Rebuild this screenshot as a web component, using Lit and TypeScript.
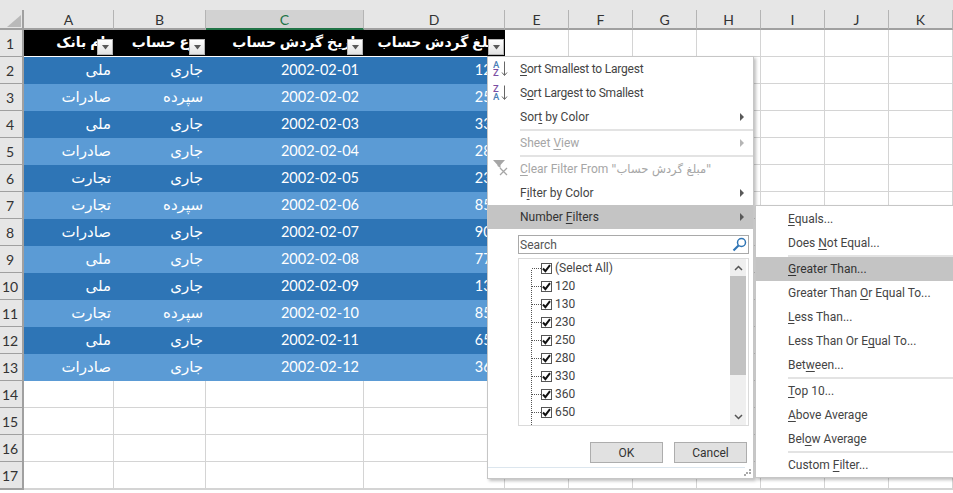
import { LitElement, html, css, svg } from "lit";
import { customElement } from "lit/decorators.js";

const cols = ["A", "B", "C", "D", "E", "F", "G", "H", "I", "J", "K"];
const rowsData = [
  ["ملی", "جاری", "2002-02-01", "120"],
  ["صادرات", "سپرده", "2002-02-02", "250"],
  ["ملی", "جاری", "2002-02-03", "330"],
  ["صادرات", "جاری", "2002-02-04", "280"],
  ["تجارت", "جاری", "2002-02-05", "230"],
  ["تجارت", "سپرده", "2002-02-06", "850"],
  ["صادرات", "جاری", "2002-02-07", "900"],
  ["ملی", "جاری", "2002-02-08", "770"],
  ["ملی", "جاری", "2002-02-09", "130"],
  ["تجارت", "سپرده", "2002-02-10", "850"],
  ["ملی", "جاری", "2002-02-11", "650"],
  ["صادرات", "جاری", "2002-02-12", "360"],
];
const heads = ["نام بانک", "نوع حساب", "تاریخ گردش حساب", "مبلغ گردش حساب"];
const listValues = ["(Select All)", "120", "130", "230", "250", "280", "330", "360", "650"];

const arrow = svg`<svg width="7" height="5" viewBox="0 0 7 5"><path d="M0 0h7L3.500 4.500z" fill="#595959"/></svg>`;
const chk = svg`<svg width="9" height="9" viewBox="0 0 9 9"><path d="M1 4.500 3.400 7.200 8 1.200" fill="none" stroke="#111" stroke-width="2"/></svg>`;

@customElement("app-root")
export class AppRoot extends LitElement {
  static styles = css`
    :host { display: block; position: relative; width: 953px; height: 493px; overflow: hidden; background: #fff; font-family: Roboto, sans-serif; }
    .top { height: 10px; background: #e6e6e6; }
    .sheet { display: grid; grid-template-columns: 24px 90px 92px 158px 141px repeat(7, 64px); grid-template-rows: 20px 27px repeat(16, 27px); }
    .corner { background: #e6e6e6; border-right: 2px solid #a0a0a0; border-bottom: 2px solid #a0a0a0; box-sizing: border-box; display: flex; align-items: flex-end; justify-content: flex-end; padding: 0 1px 1px 0; }
    .ch { background: #e6e6e6; border-right: 1px solid #b4b4b4; border-bottom: 2px solid #a0a0a0; box-sizing: border-box; display: flex; align-items: center; justify-content: center; font: 14px Lato, sans-serif; color: #333; }
    .ch.sel { background: #d2d2d2; border-bottom-color: #217346; color: #217346; }
    .rh { background: #e6e6e6; border-right: 2px solid #a0a0a0; border-bottom: 1px solid #a0a0a0; box-sizing: border-box; display: flex; align-items: center; justify-content: center; font: 14px Lato, sans-serif; color: #333; padding-right: 2px; }
    .c { border-right: 1px solid #d4d4d4; border-bottom: 1px solid #d4d4d4; box-sizing: border-box; }
    .hd { background: #000; color: #fff; position: relative; border-bottom: 1px solid #fff; box-sizing: border-box; display: flex; align-items: center; padding: 0 3px 2px 0; font: bold 14px "DejaVu Sans", sans-serif; word-spacing: -1px; overflow: hidden; white-space: nowrap; direction: rtl; justify-content: flex-start; }
    .fb { position: absolute; right: 1px; bottom: 1px; width: 16px; height: 16px; background: linear-gradient(#fff, #e3e3e3); border: 1px solid #b5b5b5; box-sizing: border-box; display: flex; align-items: center; justify-content: center; }
    .d { color: #fff; display: flex; align-items: center; padding: 0 5px 2px 0; box-sizing: border-box; justify-content: flex-end; white-space: nowrap; overflow: hidden; }
    .d.even { background: #2e75b6; }
    .d.odd { background: #5b9bd5; }
    .d.ar { font: 15px "DejaVu Sans", sans-serif; direction: rtl; justify-content: flex-start; padding-right: 3px; }
    .d.num { font: 14.5px Lato, sans-serif; }

    .menu { position: absolute; background: #fff; border: 1px solid #c6c6c6; box-shadow: 2px 2px 3px rgba(0,0,0,.25); box-sizing: border-box; font: 12px Roboto, sans-serif; color: #444; }
    .main { left: 487px; top: 56px; width: 267px; height: 423px; display: flex; flex-direction: column; }
    .sub { left: 755px; top: 205px; width: 210px; height: 273px; padding-top: 1px; display: flex; flex-direction: column; }
    .it { height: 24px; flex: none; display: flex; align-items: center; padding-left: 32px; position: relative; white-space: nowrap; }
    .it.dis { color: #a6a6a6; }
    .it.hi { background: #c4c4c4; color: #333; }
    .tight { letter-spacing: -0.21px; }
    .fa { font: 11.5px "DejaVu Sans", sans-serif; }
    .tri { position: absolute; right: 9px; top: 8px; width: 0; height: 0; border-left: 4px solid #595959; border-top: 4px solid transparent; border-bottom: 4px solid transparent; }
    .it.dis .tri { border-left-color: #b5b5b5; }
    .ic { position: absolute; left: 5px; top: 3px; }
    .sep { height: 2px; flex: none; margin-left: 32px; background: #e3e3e3; }
    u { text-underline-offset: 2px; }
    .panel { flex: 1; display: flex; flex-direction: column; padding: 6px 0 0 30px; position: relative; }
    .search { width: 231px; height: 19px; flex: none; box-sizing: border-box; border: 1px solid #a9a9a9; display: flex; align-items: center; justify-content: space-between; padding: 0 1px; color: #555; }
    .list { margin-top: 4px; width: 231px; height: 168px; flex: none; box-sizing: border-box; border: 1px solid #dadada; display: flex; overflow: hidden; }
    .tree { flex: 1; position: relative; overflow: hidden; }
    .tree::before { content: ""; position: absolute; left: 12px; top: 11px; bottom: 0; border-left: 1px dotted #555; }
    .li { height: 18px; display: flex; align-items: center; padding-left: 13px; gap: 3px; }
    .dots { width: 9px; border-top: 1px dotted #555; margin-right: -3px; }
    .box { width: 11px; height: 11px; box-sizing: border-box; border: 1px solid #555; display: flex; align-items: center; justify-content: center; background: #fff; }
    .sb { width: 16px; margin-right: 2px; background: #efefef; display: flex; flex-direction: column; align-items: center; }
    .end { height: 17px; flex: none; display: flex; align-items: center; justify-content: center; }
    .thumb { height: 99px; width: 100%; background: #c2c2c2; flex: none; }
    .rest { flex: 1; }
    .btns { display: flex; gap: 11px; margin-top: 16px; padding-left: 72px; }
    .btn { width: 73px; height: 21px; box-sizing: border-box; background: #e1e1e1; border: 1px solid #adadad; display: flex; align-items: center; justify-content: center; color: #333; }
    .foot { position: absolute; left: 0; right: 8px; bottom: 10px; height: 1px; background: #dce6ee; }
    .grip { position: absolute; right: 2px; bottom: 2px; }
  `;

  render() {
    const cells = [];
    cells.push(html`<div class="corner"><svg width="14" height="12" viewBox="0 0 14 12"><path d="M14 0v12H0z" fill="#b9b9b9"/></svg></div>`);
    for (const c of cols) cells.push(html`<div class="ch ${c === "C" ? "sel" : ""}">${c}</div>`);
    cells.push(html`<div class="rh">1</div>`);
    heads.forEach((h) => cells.push(html`<div class="hd" dir="rtl">${h}<span class="fb">${arrow}</span></div>`));
    for (let i = 0; i < 7; i++) cells.push(html`<div class="c"></div>`);
    rowsData.forEach((r, i) => {
      const z = i % 2 === 0 ? "even" : "odd";
      cells.push(html`<div class="rh">${i + 2}</div>`);
      cells.push(html`<div class="d ar ${z}">${r[0]}</div>`);
      cells.push(html`<div class="d ar ${z}">${r[1]}</div>`);
      cells.push(html`<div class="d num ${z}">${r[2]}</div>`);
      cells.push(html`<div class="d num ${z}">${r[3]}</div>`);
      for (let j = 0; j < 7; j++) cells.push(html`<div class="c"></div>`);
    });
    for (let n = 14; n <= 18; n++) {
      cells.push(html`<div class="rh">${n === 18 ? "" : n}</div>`);
      for (let j = 0; j < 11; j++) cells.push(html`<div class="c"></div>`);
    }
    const sortIcon = (a: string, b: string) => html`<svg class="ic" width="16" height="18" viewBox="0 0 16 18">
      <text x="0" y="8" font-size="9.500" font-weight="500" font-family="Roboto" fill="${a === "A" ? "#4a7fb8" : "#7b4fa3"}">${a}</text>
      <text x="0" y="15.500" font-size="9.500" font-weight="500" font-family="Roboto" fill="${b === "A" ? "#4a7fb8" : "#7b4fa3"}">${b}</text>
      <path d="M11.500 1.500v13.500M9 12.500l2.500 3 2.500-3" fill="none" stroke="#666" stroke-width="1"/></svg>`;
    return html`
      <div class="top"></div>
      <div class="sheet">${cells}</div>
      <div class="menu main">
        <div class="it">${sortIcon("A", "Z")}<span class="tight"><u>S</u>ort Smallest to Largest</span></div>
        <div class="it">${sortIcon("Z", "A")}<span class="tight">S<u>o</u>rt Largest to Smallest</span></div>
        <div class="it"><span>Sor<u>t</u> by Color</span><i class="tri"></i></div>
        <div class="sep"></div>
        <div class="it dis"><span>Sheet <u>V</u>iew</span><i class="tri"></i></div>
        <div class="sep"></div>
        <div class="it dis"><svg class="ic" width="16" height="16" viewBox="0 0 16 16"><path d="M0 0h12L7.500 5v3L4.500 6V5z" fill="#a6a6a6"/><path d="M7 8l7 7M14 8l-7 7" stroke="#a6a6a6" stroke-width="1.300"/></svg><span><u>C</u>lear Filter From <span class="fa">"مبلغ گردش حساب"</span></span></div>
        <div class="it"><span>F<u>i</u>lter by Color</span><i class="tri"></i></div>
        <div class="it hi"><span>Number <u>F</u>ilters</span><i class="tri"></i></div>
        <div class="panel">
          <div class="search"><span>Search</span><svg width="15" height="15" viewBox="0 0 15 15"><circle cx="9.500" cy="5.500" r="4" fill="none" stroke="#2f75b5" stroke-width="1.500"/><path d="M6.500 8.500 1.500 13.500" stroke="#2f75b5" stroke-width="2.200"/></svg></div>
          <div class="list">
            <div class="tree">
              ${listValues.map((v) => html`<div class="li"><span class="dots"></span><span class="box">${chk}</span><span>${v}</span></div>`)}
              <div class="li"><span class="dots"></span><span class="box"></span></div>
            </div>
            <div class="sb">
              <div class="end"><svg width="9" height="6" viewBox="0 0 9 6"><path d="M1 5l3.500-3.500L8 5" fill="none" stroke="#555" stroke-width="1.500"/></svg></div>
              <div class="thumb"></div><div class="rest"></div>
              <div class="end"><svg width="9" height="6" viewBox="0 0 9 6"><path d="M1 1l3.500 3.500L8 1" fill="none" stroke="#555" stroke-width="1.500"/></svg></div>
            </div>
          </div>
          <div class="btns"><div class="btn">OK</div><div class="btn">Cancel</div></div>
          <div class="foot"></div>
          <svg class="grip" width="7" height="7" viewBox="0 0 7 7"><path d="M5 0h2v2H5zM2 3h2v2H2zM5 3h2v2H5zM0 5h2v2H0z" fill="#a9a9a9"/></svg>
        </div>
      </div>
      <div class="menu sub">
        <div class="it"><span><u>E</u>quals...</span></div>
        <div class="it"><span>Does <u>N</u>ot Equal...</span></div>
        <div class="sep"></div>
        <div class="it hi"><span><u>G</u>reater Than...</span></div>
        <div class="it"><span>Greater Than <u>O</u>r Equal To...</span></div>
        <div class="it"><span><u>L</u>ess Than...</span></div>
        <div class="it"><span>Less Than Or E<u>q</u>ual To...</span></div>
        <div class="it"><span>Bet<u>w</u>een...</span></div>
        <div class="sep"></div>
        <div class="it"><span><u>T</u>op 10...</span></div>
        <div class="it"><span><u>A</u>bove Average</span></div>
        <div class="it"><span>Bel<u>o</u>w Average</span></div>
        <div class="sep"></div>
        <div class="it"><span>Custom <u>F</u>ilter...</span></div>
      </div>
    `;
  }
}
